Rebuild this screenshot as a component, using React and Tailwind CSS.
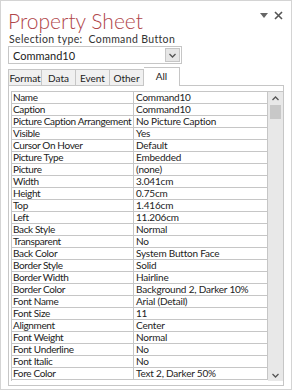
import React from "react";

const rows = [
  ["Name", "Command10"],
  ["Caption", "Command10"],
  ["Picture Caption Arrangement", "No Picture Caption"],
  ["Visible", "Yes"],
  ["Cursor On Hover", "Default"],
  ["Picture Type", "Embedded"],
  ["Picture", "(none)"],
  ["Width", "3.041cm"],
  ["Height", "0.75cm"],
  ["Top", "1.416cm"],
  ["Left", "11.206cm"],
  ["Back Style", "Normal"],
  ["Transparent", "No"],
  ["Back Color", "System Button Face"],
  ["Border Style", "Solid"],
  ["Border Width", "Hairline"],
  ["Border Color", "Background 2, Darker 10%"],
  ["Font Name", "Arial (Detail)"],
  ["Font Size", "11"],
  ["Alignment", "Center"],
  ["Font Weight", "Normal"],
  ["Font Underline", "No"],
  ["Font Italic", "No"],
  ["Fore Color", "Text 2, Darker 50%"],
];

const Chevron = ({ up }) => (
  <svg width="7" height="5" viewBox="0 0 7 5">
    <path d={up ? "M0.5 4 L3.5 1 L6.5 4" : "M0.5 1 L3.5 4 L6.5 1"} fill="none" stroke="#555" strokeWidth="1.3" />
  </svg>
);

export default function App() {
  return (
    <div
      className="w-[292px] h-[390px] bg-white border border-[#d4d4d4] flex flex-col text-[#222] overflow-hidden"
      style={{ fontFamily: 'Lato, "Noto Sans", sans-serif' }}
    >
      <div className="flex items-start justify-between pl-[7px] pr-[8px] h-[32px]">
        <div className="text-[21px] font-light leading-none text-[#b0464a] mt-[9px]">Property Sheet</div>
        <div className="flex items-center gap-[6px] mt-[10px]">
          <svg width="8" height="5" viewBox="0 0 8 5"><path d="M0 0 L8 0 L4 5 Z" fill="#666" /></svg>
          <svg width="9" height="9" viewBox="0 0 9 9"><path d="M1 1 L8 8 M8 1 L1 8" stroke="#555" strokeWidth="1.6" /></svg>
        </div>
      </div>
      <div className="pl-[8px] text-[10.5px] leading-[12px] h-[12px] text-[#333] tracking-[0.35px]">
        Selection type:&nbsp;&nbsp;Command Button
      </div>
      <div className="ml-[7px] mt-[1px] w-[174px] h-[18px] border border-[#c6c6c6] flex items-center justify-between">
        <span className="pl-[4px] text-[11px] leading-none">Command10</span>
        <div className="w-[15px] h-[14px] mr-[1px] bg-[#e6e6e6] border border-[#c6c6c6] flex items-center justify-center">
          <Chevron />
        </div>
      </div>
      <div className="flex items-end ml-[7px] mt-[3px] h-[19px] relative z-10">
        {["Format", "Data", "Event", "Other"].map((t, i) => (
          <div
            key={t}
            className={`h-[17px] w-[34px] bg-[#f0f0f0] border border-[#c6c6c6] ${i > 0 ? "border-l-0" : ""} flex items-center justify-center text-[10px] leading-none`}
          >
            {t}
          </div>
        ))}
        <div className="h-[19px] w-[36px] bg-white border border-[#c6c6c6] border-b-0 border-l-0 flex items-center justify-center text-[10px] leading-none pb-[2px]">
          All
        </div>
      </div>
      <div className="ml-[7px] mt-[-1px] w-[276px] h-[301px] border border-[#c6c6c6] flex pl-[2px] pt-[5px] pb-[4px]">
        <div className="flex-1 border-t border-l border-[#c6c6c6] flex flex-col">
          {rows.map(([k, v]) => (
            <div key={k} className="flex h-[12px] border-b border-[#c6c6c6] text-[10px] leading-[11px]">
              <div className="w-[122px] pl-[1px] border-r border-[#c6c6c6] whitespace-nowrap overflow-hidden tracking-[-0.35px]">{k}</div>
              <div className="flex-1 pl-[2px] border-r border-[#c6c6c6] whitespace-nowrap overflow-hidden tracking-[-0.2px]">{v}</div>
            </div>
          ))}
        </div>
        <div className="w-[15px] bg-[#e8e8e8] flex flex-col items-center border-t border-[#c6c6c6]">
          <div className="h-[12px] flex items-center justify-center"><Chevron up /></div>
          <div className="w-[11px] h-[14px] bg-[#c8c8c8] mt-[1px]" />
          <div className="flex-1" />
          <div className="h-[12px] flex items-center justify-center"><Chevron /></div>
        </div>
      </div>
    </div>
  );
}
